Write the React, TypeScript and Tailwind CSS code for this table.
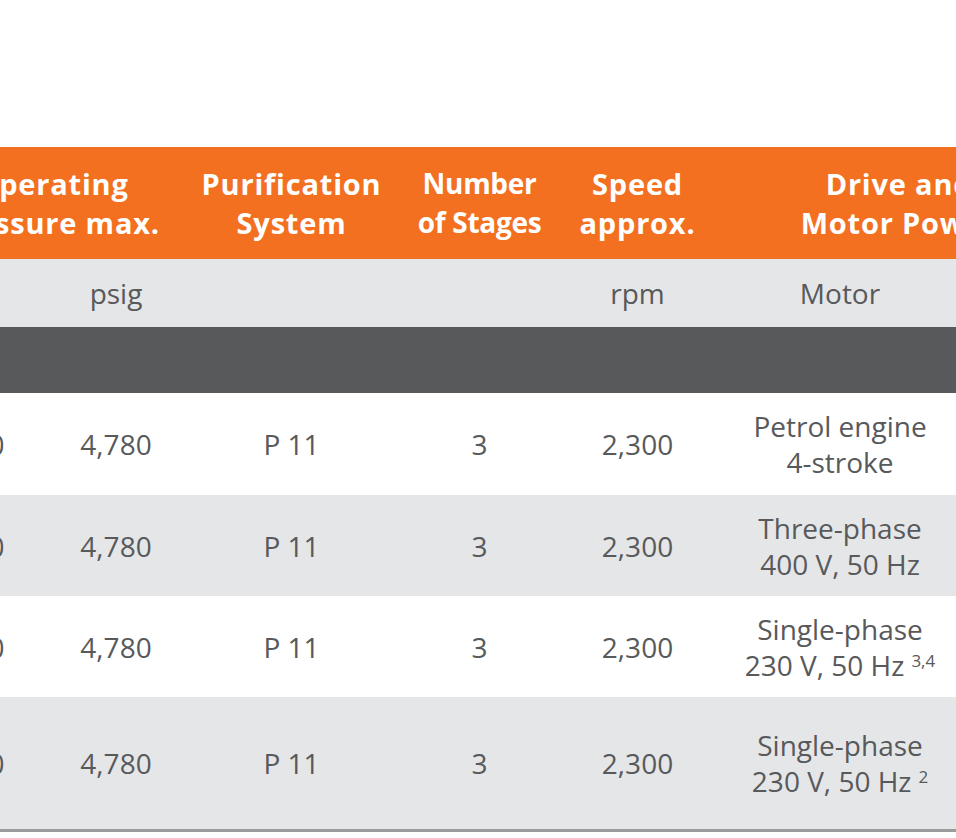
type Row = {
  bar: string;
  psig: string;
  system: string;
  stages: string;
  rpm: string;
  motor: string[];
  sup?: string;
  kw: string;
  shade: boolean;
  height: string;
};

const rows: Row[] = [
  { bar: "330", psig: "4,780", system: "P 11", stages: "3", rpm: "2,300", motor: ["Petrol engine", "4-stroke"], kw: "4.8", shade: false, height: "h-[102px]" },
  { bar: "330", psig: "4,780", system: "P 11", stages: "3", rpm: "2,300", motor: ["Three-phase", "400 V, 50 Hz"], kw: "5.5", shade: true, height: "h-[101px]" },
  { bar: "330", psig: "4,780", system: "P 11", stages: "3", rpm: "2,300", motor: ["Single-phase", "230 V, 50 Hz"], sup: "3,4", kw: "4.0", shade: false, height: "h-[101px]" },
  { bar: "330", psig: "4,780", system: "P 11", stages: "3", rpm: "2,300", motor: ["Single-phase", "230 V, 50 Hz"], sup: "2", kw: "3.0", shade: true, height: "h-[133px]" },
];

const head = "text-center align-middle text-[29px] font-bold leading-[39px] tracking-[0.8px] text-white";
const unit = "text-center align-middle text-[28px] leading-none text-[#58595b]";
const cell = "text-center align-middle text-[28px] leading-[36px] text-[#58595b]";

export default function App() {
  return (
    <div className="h-[838px] w-[956px] overflow-hidden bg-white pt-[147px] font-['Open_Sans',sans-serif]">
      <table className="ml-[-94px] w-[1163px] table-fixed border-collapse">
        <colgroup>
          <col className="w-[140px]" />
          <col className="w-[140px]" />
          <col className="w-[211px]" />
          <col className="w-[165px]" />
          <col className="w-[151px]" />
          <col className="w-[254px]" />
          <col className="w-[102px]" />
        </colgroup>
        <thead>
          <tr className="h-[112px] bg-[#f37021]">
            <th colSpan={2} className={`${head} pl-[12px]`}>
              Operating
              <br />
              Pressure max.
            </th>
            <th className={head}>
              Purification
              <br />
              System
            </th>
            <th className="text-center align-middle text-[28px] font-bold leading-[39px] tracking-[-0.3px] text-white">
              Number
              <br />
              of Stages
            </th>
            <th className={head}>
              Speed
              <br />
              approx.
            </th>
            <th colSpan={2} className={`${head} pl-[16px]`}>
              Drive and
              <br />
              Motor Power
            </th>
          </tr>
          <tr className="h-[68px] bg-[#e5e6e8]">
            <td className={unit}>bar</td>
            <td className={unit}>psig</td>
            <td className={unit}></td>
            <td className={unit}></td>
            <td className={unit}>rpm</td>
            <td className={unit}>Motor</td>
            <td className={unit}>kW</td>
          </tr>
          <tr className="h-[66px] bg-[#58595b]">
            <td colSpan={7}></td>
          </tr>
        </thead>
        <tbody>
          {rows.map((r, i) => (
            <tr
              key={i}
              className={`${r.height} ${r.shade ? "bg-[#e5e6e8]" : "bg-white"} ${
                i === rows.length - 1 ? "border-b-[3px] border-[#9a9a9a]" : ""
              }`}
            >
              <td className={`${cell} pl-[9px]`}>{r.bar}</td>
              <td className={cell}>{r.psig}</td>
              <td className={cell}>{r.system}</td>
              <td className={cell}>{r.stages}</td>
              <td className={cell}>{r.rpm}</td>
              <td className={cell}>
                {r.motor[0]}
                <br />
                {r.motor[1]}
                {r.sup && (
                  <sup className="ml-[7px] text-[17px] leading-none">{r.sup}</sup>
                )}
              </td>
              <td className={cell}>{r.kw}</td>
            </tr>
          ))}
        </tbody>
      </table>
    </div>
  );
}
